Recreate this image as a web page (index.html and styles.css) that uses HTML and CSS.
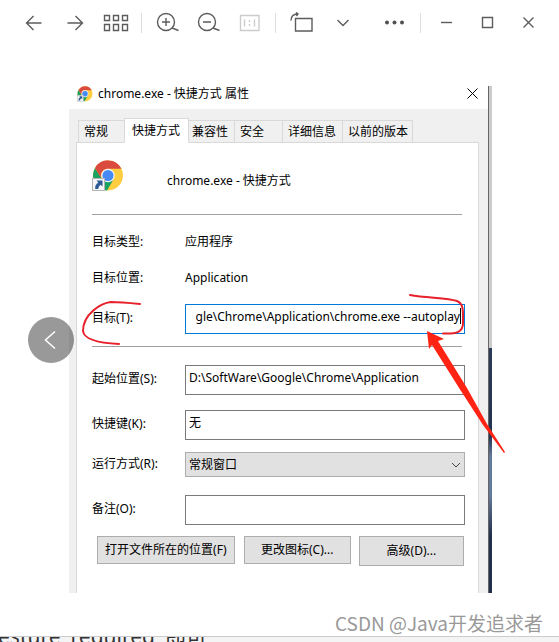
FILE: index.html
```html
<!DOCTYPE html>
<html lang="zh-CN">
<head>
    <meta charset="UTF-8">
    <meta name="viewport" content="width=device-width, initial-scale=1.0">
    <title>chrome.exe - 快捷方式 属性</title>
    <link rel="stylesheet" href="styles.css">
</head>
<body>

<!-- Chrome logo, used twice -->
<svg class="defs" width="0" height="0" aria-hidden="true">
    <symbol id="chrome" viewBox="0 0 32 32">
        <circle cx="16" cy="15.500" r="15" fill="#ffcd40"/>
        <path d="M3 8A15 15 0 0 0 15 30.500L21.500 19.500L16 22L10 19Z" fill="#1aa260"/>
        <path d="M3 8A15 15 0 0 1 29.500 8.700H16A7 7 0 0 0 9.300 18.200Z" fill="#db4a3f"/>
        <circle cx="16" cy="15.500" r="6.800" fill="#f3f5f8"/>
        <circle cx="16" cy="15.500" r="5.500" fill="#4688f4"/>
        <rect x="0.500" y="18.500" width="12" height="12" fill="#f7f7f7" stroke="#b4b4b4"/>
        <path d="M4.500 20.500H10.500V26.500L8.500 24.700C7 26 6.500 27 6.300 29H3.200C3 26 4 24 6.300 22.600Z" fill="#2c5a94"/>
    </symbol>
</svg>

<main class="viewer">
    <header class="toolbar">
        <button class="tool" aria-label="上一张"><svg width="26" height="22" viewBox="0 0 26 22"><path d="M20.500 11H6M12.500 4L5.500 11L12.500 18"/></svg></button>
        <button class="tool" aria-label="下一张"><svg width="26" height="22" viewBox="0 0 26 22"><path d="M5.500 11H20M13.500 4L20.500 11L13.500 18"/></svg></button>
        <button class="tool" aria-label="缩略图"><svg width="26" height="22" viewBox="0 0 26 22"><path d="M1.500 3.500h5v5h-5zM10.500 3.500h5v5h-5zM19.500 3.500h5v5h-5zM1.500 12.500h5v6h-5zM10.500 12.500h5v6h-5zM19.500 12.500h5v6h-5z"/></svg></button>
        <span class="divider"></span>
        <button class="tool" aria-label="放大"><svg width="26" height="22" viewBox="0 0 26 22"><circle cx="11" cy="10" r="8.500"/><path d="M7 10h8M11 6v8M17 16L23.500 18.500"/></svg></button>
        <button class="tool" aria-label="缩小"><svg width="26" height="22" viewBox="0 0 26 22"><circle cx="11" cy="10" r="8.500"/><path d="M7 10h8M17 16L23.500 18.500"/></svg></button>
        <button class="tool tool-off" aria-label="原始大小"><svg width="26" height="22" viewBox="0 0 26 22"><path d="M3.500 3.500h18.500v15h-18.500zM7.500 7.500v7M17.500 7.500v7M12.500 8v2M12.500 12v2"/></svg></button>
        <span class="divider"></span>
        <button class="tool" aria-label="旋转"><svg width="26" height="22" viewBox="0 0 26 22"><path d="M6.500 6.500h16.500v12.500h-16.500zM2 8.500C2 4.500 4.500 2.200 8.500 2M7 0.500L9 2L7.500 4"/></svg></button>
        <button class="tool" aria-label="展开"><svg width="26" height="22" viewBox="0 0 26 22"><path d="M7.500 8L13 13.500L18.500 8"/></svg></button>
        <button class="tool tool-more" aria-label="更多"><svg width="26" height="22" viewBox="0 0 26 22"><g class="dots"><circle cx="5" cy="10.500" r="2"/><circle cx="12.500" cy="10.500" r="2"/><circle cx="20" cy="10.500" r="2"/></g></svg></button>
        <span class="divider"></span>
        <button class="tool" aria-label="最小化"><svg width="26" height="22" viewBox="0 0 26 22"><path d="M7 10.500h11"/></svg></button>
        <button class="tool" aria-label="最大化"><svg width="26" height="22" viewBox="0 0 26 22"><path d="M7.500 5.500h10v10h-10z"/></svg></button>
        <button class="tool" aria-label="关闭"><svg width="26" height="22" viewBox="0 0 26 22"><path d="M7.500 5.500L17.500 15.500M17.500 5.500L7.500 15.500"/></svg></button>
    </header>

    <section class="stage">
        <div class="shot">
            <div class="dialog">
                <div class="title-bar">
                    <svg class="title-icon"><use href="#chrome"/></svg>
                    <span class="title">chrome.exe - 快捷方式 属性</span>
                    <button class="close" aria-label="关闭"><svg width="11" height="11" viewBox="0 0 11 11"><path d="M0.500 0.500L10.500 10.500M10.500 0.500L0.500 10.500"/></svg></button>
                </div>

                <div class="dialog-body">
                    <nav class="tabs">
                        <button class="tab">常规</button>
                        <button class="tab tab-active">快捷方式</button>
                        <button class="tab tab-tight">兼容性</button>
                        <button class="tab tab-mid">安全</button>
                        <button class="tab tab-wide">详细信息</button>
                        <button class="tab tab-wider">以前的版本</button>
                    </nav>

                    <form class="panel">
                        <div class="head">
                            <svg class="head-icon"><use href="#chrome"/></svg>
                            <span class="head-name">chrome.exe - 快捷方式</span>
                        </div>
                        <hr class="line">
                        <div class="row">
                            <span class="label">目标类型:</span>
                            <span>应用程序</span>
                        </div>
                        <div class="row">
                            <span class="label">目标位置:</span>
                            <span>Application</span>
                        </div>
                        <div class="row row-field">
                            <label class="label" for="target">目标(T):</label>
                            <div class="field-box">
                                <input class="field field-focus" id="target" type="text" value="gle\Chrome\Application\chrome.exe --autoplay">
                                <span class="caret"></span>
                            </div>
                        </div>
                        <hr class="line">
                        <div class="row row-field">
                            <label class="label" for="start">起始位置(S):</label>
                            <input class="field" id="start" type="text" value="D:\SoftWare\Google\Chrome\Application">
                        </div>
                        <div class="row row-field">
                            <label class="label" for="hotkey">快捷键(K):</label>
                            <input class="field" id="hotkey" type="text" value="无">
                        </div>
                        <div class="row row-select">
                            <label class="label" for="run">运行方式(R):</label>
                            <div class="field-box">
                                <select class="select" id="run">
                                    <option>常规窗口</option>
                                </select>
                                <svg class="select-arrow" width="10" height="6" viewBox="0 0 10 6"><path d="M1 1L5 5L9 1"/></svg>
                            </div>
                        </div>
                        <div class="row row-field row-note">
                            <label class="label" for="note">备注(O):</label>
                            <input class="field" id="note" type="text">
                        </div>
                        <div class="actions">
                            <button class="button button-open" type="button">打开文件所在的位置(F)</button>
                            <button class="button button-icon" type="button">更改图标(C)...</button>
                            <button class="button button-more" type="button">高级(D)...</button>
                        </div>
                    </form>
                </div>
            </div>
            <div class="edge"></div>

            <!-- hand-drawn marks over the dialog -->
            <svg class="marks" width="450" height="400" viewBox="69 86 450 400" aria-hidden="true">
                <path class="pen" d="M140 304C130 303 120 302 111 302C101 303 83 314 83 331C84 339 97 343 119 344"/>
                <path class="pen" d="M410 295C427 298 447 298 457 301C464 304 463 311 463 323C463 332 457 334 443 333.500"/>
                <path class="arrow" d="M427 331L444 339L438 341L467 388L487 424L505 452L504 453L483 425L461 391L432 345L429 349Z"/>
            </svg>
        </div>
    </section>

    <button class="prev" aria-label="上一张"><svg width="46" height="46" viewBox="0 0 46 46"><path d="M27 14.500L17.500 23L27 31.500"/></svg></button>
    <p class="watermark">CSDN @Java开发追求者</p>
</main>

<div class="behind">
    <span>esture</span>
    <span>required</span>
    <span>即可</span>
</div>

</body>
</html>
```
FILE: styles.css
```css
* {
    box-sizing: border-box;
}

body {
    margin: 0;
    height: 100vh;
    display: flex;
    flex-direction: column;
    overflow: hidden;
    background-color: #f4f4f4;
    color: #000;
    font-family: "Noto Sans", "Noto Sans CJK SC", sans-serif;
    font-size: 12px;
    line-height: 20px;
}

button,
input,
select {
    margin: 0;
    font: inherit;
    color: inherit;
    outline: none;
}

svg {
    display: block;
    fill: none;
}

.defs {
    position: absolute;
}

/* image viewer */
.viewer {
    position: relative;
    flex: 1;
    min-height: 0;
    background-color: #fff;
    border-bottom: 1px solid #ccc;
}

.toolbar {
    display: flex;
    align-items: center;
    height: 46px;
    padding: 0 10px 0 13px;
}

.tool {
    display: flex;
    justify-content: center;
    width: 41px;
    padding: 0;
    border: none;
    background: none;
    stroke: #5c5c5c;
    stroke-width: 1.4;
}

.tool-off {
    stroke: #ccc;
}

.tool-more {
    margin-left: auto;
}

.dots {
    fill: #505050;
    stroke: none;
}

.divider {
    width: 1px;
    height: 20px;
    margin: 0 5px;
    background-color: #ddd;
}

.stage {
    padding: 40px 67px 0 69px;
}

.shot {
    position: relative;
    display: flex;
}

/* properties dialog */
.dialog {
    flex: 1;
    min-width: 0;
    background-color: #f0f0f0;
}

.title-bar {
    display: flex;
    align-items: center;
    height: 23px;
    padding: 0 10px 8px 8px;
    background-color: #fff;
}

.title-icon {
    width: 16px;
    height: 16px;
}

.title {
    flex: 1;
    margin-left: 5px;
}

.close {
    padding: 0;
    border: none;
    background: none;
    stroke: #000;
}

.dialog-body {
    padding: 9px 9px 0 7px;
}

.tabs {
    display: flex;
    align-items: flex-end;
    height: 25px;
    margin-bottom: -1px;
    padding-left: 2px;
}

.tab {
    min-width: 47px;
    height: 23px;
    margin-right: -1px;
    padding: 0 4px 0 5px;
    border: 1px solid #d9d9d9;
    background-color: #f0f0f0;
    text-align: left;
    white-space: nowrap;
}

.tab-active {
    min-width: 65px;
    height: 25px;
    padding: 0 7px;
    border-bottom-color: #fff;
    background-color: #fff;
    z-index: 1;
}

.tab-tight {
    padding: 0 3px;
}

.tab-mid {
    min-width: 49px;
}

.tab-wide {
    min-width: 61px;
}

.tab-wider {
    min-width: 71px;
}

.panel {
    padding: 17px 13px 27px 15px;
    border: 1px solid #d9d9d9;
    border-bottom: none;
    background-color: #fff;
}

.head {
    display: flex;
    align-items: center;
}

.head-icon {
    width: 32px;
    height: 32px;
}

.head-name {
    margin: 10px 0 0 43px;
}

.line {
    height: 1px;
    margin: 22px 3px 17px 0;
    border: none;
    background-color: #a0a0a0;
}

.row {
    display: flex;
    margin-bottom: 16px;
}

.row-field {
    margin-bottom: 15px;
}

.row-field .label {
    padding-top: 4px;
}

.row-field + .line {
    margin: -3px 3px 18px 0;
}

.label {
    width: 93px;
    flex-shrink: 0;
}

.field-box {
    position: relative;
    flex: 1;
    min-width: 0;
}

.field {
    display: block;
    flex: 1;
    width: 100%;
    min-width: 0;
    height: 30px;
    padding: 0 3px 6px;
    border: 1px solid #7a7a7a;
    background-color: #fff;
}

.field-focus {
    border-color: #0078d7;
    padding-right: 4px;
    text-align: right;
}

.caret {
    position: absolute;
    top: 4px;
    right: 4px;
    width: 1px;
    height: 16px;
    background-color: #000;
}

.row-select {
    margin: -3px 0 18px;
}

.row-select .label {
    padding-top: 2px;
}

.select {
    display: block;
    width: 100%;
    height: 25px;
    padding: 0 3px;
    border: 1px solid #adadad;
    border-radius: 0;
    background-color: #e1e1e1;
    appearance: none;
}

.select-arrow {
    position: absolute;
    top: 10px;
    right: 4px;
    stroke: #444;
    pointer-events: none;
}

.row-note {
    margin-bottom: 11px;
}

.actions {
    display: flex;
    align-items: flex-start;
    padding: 0 1px 0 5px;
}

.button {
    height: 28px;
    padding: 0;
    border: 1px solid #adadad;
    background-color: #e1e1e1;
    white-space: nowrap;
}

.button-open {
    flex: 138;
}

.button-icon {
    flex: 107;
    margin: 0 8px 0 9px;
}

.button-more {
    flex: 105;
    height: 30px;
}

/* strip of the desktop next to the dialog */
.edge {
    width: 4px;
    border-left: 1px solid #666;
    background: linear-gradient(#ccc 262px, #2c3b58 262px, #24324f 350px, #65799a 370px, #65799a 410px, #22304d 450px);
}

.marks {
    position: absolute;
    top: 0;
    left: 0;
    pointer-events: none;
}

.pen {
    stroke: #e8202a;
    stroke-width: 2;
    stroke-linecap: round;
}

.arrow {
    fill: #ff2314;
}

.prev {
    position: absolute;
    top: 317px;
    left: 28px;
    width: 46px;
    height: 46px;
    padding: 0;
    border: none;
    border-radius: 50%;
    background-color: rgba(0, 0, 0, 0.4);
    stroke: #fff;
    stroke-width: 1.5;
}

.watermark {
    position: absolute;
    right: 16px;
    bottom: 0;
    margin: 0;
    color: #999;
    font-family: "Noto Sans CJK SC", sans-serif;
    font-size: 19px;
    line-height: 26px;
}

/* page text showing under the viewer */
.behind {
    display: flex;
    align-items: flex-end;
    gap: 10px;
    height: 5px;
    margin-left: -2px;
    overflow: hidden;
    color: #333;
    font-size: 21px;
}

.behind span {
    margin-bottom: -4px;
}
```
